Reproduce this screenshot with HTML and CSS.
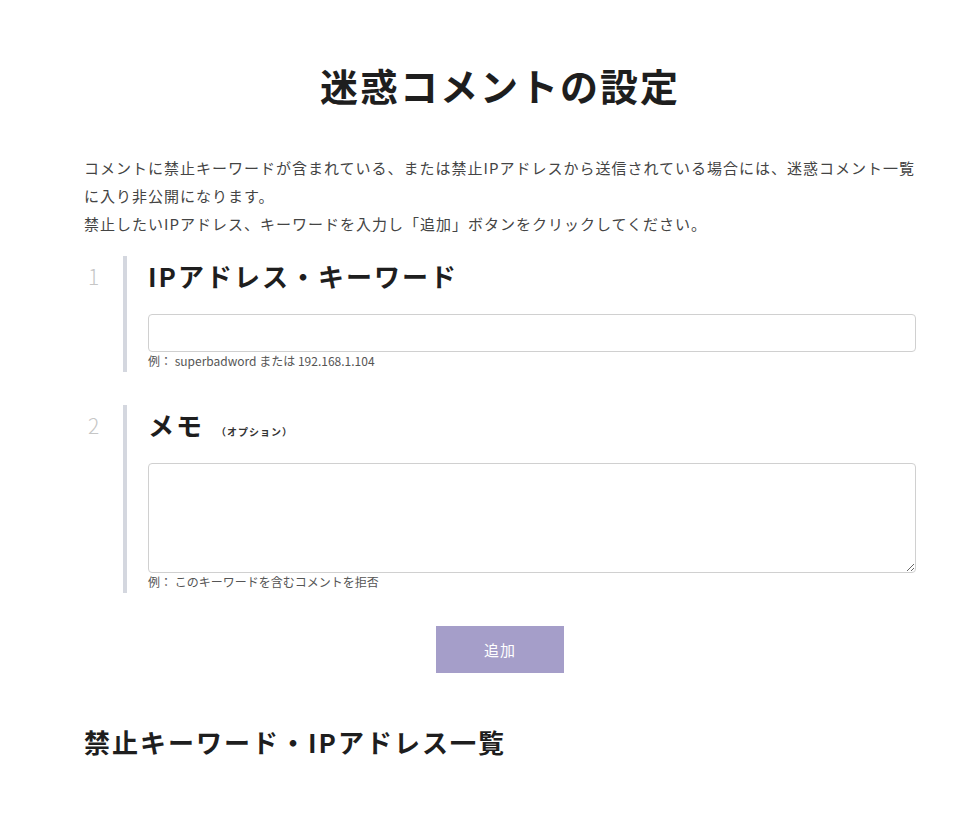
FILE: index.html
```html
<!DOCTYPE html>
<html lang="ja">
<head>
  <meta charset="UTF-8">
  <meta name="viewport" content="width=device-width, initial-scale=1.0">
  <title>迷惑コメントの設定</title>
  <link rel="stylesheet" href="styles.css">
</head>
<body>
  <main class="page">
    <h1 class="page-title">迷惑コメントの設定</h1>

    <p class="intro">コメントに禁止キーワードが含まれている、または禁止IPアドレスから送信されている場合には、迷惑コメント一覧に入り非公開になります。<br>禁止したいIPアドレス、キーワードを入力し「追加」ボタンをクリックしてください。</p>

    <form class="spam-form">
      <div class="step">
        <span class="step-num">1</span>
        <div class="step-body">
          <h2 class="step-title">IPアドレス・キーワード</h2>
          <input type="text" class="field">
          <p class="hint">例： superbadword または 192.168.1.104</p>
        </div>
      </div>

      <div class="step step-memo">
        <span class="step-num">2</span>
        <div class="step-body">
          <h2 class="step-title">メモ <small class="optional">（オプション）</small></h2>
          <textarea class="field field-area"></textarea>
          <p class="hint">例： このキーワードを含むコメントを拒否</p>
        </div>
      </div>

      <div class="actions">
        <button type="button" class="add-btn">追加</button>
      </div>
    </form>

    <h2 class="list-title">禁止キーワード・IPアドレス一覧</h2>
  </main>
</body>
</html>
```

FILE: styles.css
```css
body {
  font-family: "Noto Sans CJK JP", "Noto Sans", sans-serif;
  margin: 0;
  padding: 0;
  background-color: #fff;
  color: #222;
}

.page {
  width: 832px;
  margin-left: 84px;
  padding-top: 59px;
}

.page-title {
  margin: 0;
  text-align: center;
  font-size: 38px;
  line-height: 52px;
  letter-spacing: 2px;
  font-weight: bold;
  color: #1e1e1e;
}

.intro {
  margin: 43px -4px 0 0;
  font-size: 15px;
  line-height: 28px;
  letter-spacing: 1px;
  color: #444;
}

.spam-form {
  margin-top: 18px;
}

.step {
  display: flex;
}

.step-memo {
  margin-top: 33px;
}

.step-num {
  width: 39px;
  padding-left: 4px;
  box-sizing: border-box;
  font-size: 21px;
  line-height: 40px;
  font-weight: 300;
  color: #c6c6c6;
}

.step-body {
  flex: 1;
  border-left: 4px solid #d4d7df;
  padding: 2px 0 2px 21px;
}

.step-title {
  margin: 0;
  height: 36px;
  font-size: 26px;
  line-height: 36px;
  letter-spacing: 2px;
  font-weight: bold;
  color: #1e1e1e;
}

.optional {
  font-size: 10px;
  line-height: 1;
  letter-spacing: 1px;
  font-weight: bold;
  color: #333;
  margin-left: 4px;
}

.field {
  display: block;
  width: 100%;
  height: 38px;
  margin-top: 20px;
  box-sizing: border-box;
  border: 1px solid #d0d0d0;
  border-radius: 4px;
  padding: 6px 10px;
  font-family: inherit;
  font-size: 14px;
}

.field-area {
  height: 110px;
  resize: vertical;
}

.hint {
  margin: 0;
  font-size: 12px;
  line-height: 18px;
  color: #555;
}

.actions {
  display: flex;
  justify-content: center;
  margin-top: 33px;
}

.add-btn {
  width: 128px;
  height: 47px;
  border: none;
  background-color: #a59ec9;
  color: #fff;
  font-family: inherit;
  font-size: 15px;
  letter-spacing: 1px;
  cursor: pointer;
}

.add-btn:hover {
  background-color: #948cbd;
}

.list-title {
  margin: 51px 0 0;
  font-size: 26px;
  line-height: 36px;
  letter-spacing: 2px;
  font-weight: bold;
  color: #1e1e1e;
}
```
